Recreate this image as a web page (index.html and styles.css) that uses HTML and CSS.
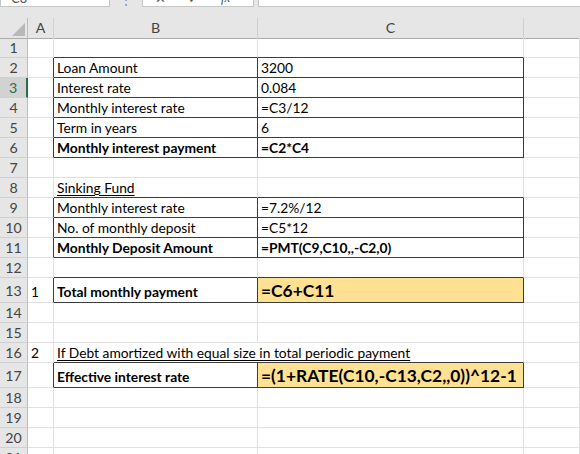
FILE: index.html
```html
<!DOCTYPE html>
<html>
<head>
<meta charset="utf-8">
<link rel="stylesheet" href="styles.css">
</head>
<body>
<div class="topbar">
  <div class="namebox"><span class="clip">C3</span></div>
  <div class="dots">⋮</div>
  <div class="fxbox"><span class="clip">✕</span><span class="clip">✓</span><span class="clip fx">fx</span></div>
  <div class="formula"></div>
</div>
<div class="sheet">
  <div class="row hrow">
    <div class="rh corner"><span class="tri"></span></div>
    <div class="ch">A</div>
    <div class="ch">B</div>
    <div class="ch">C</div>
    <div class="ch last"></div>
  </div>
  <div class="row"><div class="rh">1</div><div class="c"></div><div class="c db"></div><div class="c db"></div><div class="c"></div></div>
  <div class="row"><div class="rh">2</div><div class="c dr"></div><div class="c box">Loan Amount</div><div class="c box">3200</div><div class="c"></div></div>
  <div class="row"><div class="rh sel">3</div><div class="c dr"></div><div class="c box">Interest rate</div><div class="c box">0.084</div><div class="c"></div></div>
  <div class="row"><div class="rh">4</div><div class="c dr"></div><div class="c box">Monthly interest rate</div><div class="c box">=C3/12</div><div class="c"></div></div>
  <div class="row"><div class="rh">5</div><div class="c dr"></div><div class="c box">Term in years</div><div class="c box">6</div><div class="c"></div></div>
  <div class="row"><div class="rh">6</div><div class="c dr"></div><div class="c box b">Monthly interest payment</div><div class="c box b">=C2*C4</div><div class="c"></div></div>
  <div class="row"><div class="rh">7</div><div class="c"></div><div class="c"></div><div class="c"></div><div class="c"></div></div>
  <div class="row"><div class="rh">8</div><div class="c"></div><div class="c db"><span class="u">Sinking Fund</span></div><div class="c db"></div><div class="c"></div></div>
  <div class="row"><div class="rh">9</div><div class="c dr"></div><div class="c box">Monthly interest rate</div><div class="c box">=7.2%/12</div><div class="c"></div></div>
  <div class="row"><div class="rh">10</div><div class="c dr"></div><div class="c box">No. of monthly deposit</div><div class="c box">=C5*12</div><div class="c"></div></div>
  <div class="row"><div class="rh">11</div><div class="c dr"></div><div class="c box b">Monthly Deposit Amount</div><div class="c box b">=PMT(C9,C10,,-C2,0)</div><div class="c"></div></div>
  <div class="row"><div class="rh">12</div><div class="c"></div><div class="c db"></div><div class="c db"></div><div class="c"></div></div>
  <div class="row tall"><div class="rh">13</div><div class="c dr">1</div><div class="c box b">Total monthly payment</div><div class="c box big hl">=C6+C11</div><div class="c"></div></div>
  <div class="row"><div class="rh">14</div><div class="c"></div><div class="c"></div><div class="c"></div><div class="c"></div></div>
  <div class="row"><div class="rh">15</div><div class="c"></div><div class="c"></div><div class="c"></div><div class="c"></div></div>
  <div class="row"><div class="rh">16</div><div class="c">2</div><div class="c db span2"><span class="u">If Debt amortized with equal size in total periodic payment</span></div><div class="c"></div></div>
  <div class="row tall"><div class="rh">17</div><div class="c dr"></div><div class="c box b">Effective interest rate</div><div class="c box big hl">=(1+RATE(C10,-C13,C2,,0))^12-1</div><div class="c"></div></div>
  <div class="row"><div class="rh">18</div><div class="c"></div><div class="c"></div><div class="c"></div><div class="c"></div></div>
  <div class="row"><div class="rh">19</div><div class="c"></div><div class="c"></div><div class="c"></div><div class="c"></div></div>
  <div class="row"><div class="rh">20</div><div class="c"></div><div class="c"></div><div class="c"></div><div class="c"></div></div>
  <div class="row"><div class="rh">21</div><div class="c"></div><div class="c"></div><div class="c"></div><div class="c"></div></div>
</div>
</body>
</html>
```
FILE: styles.css
```css
* { box-sizing: border-box; }
html, body { margin: 0; padding: 0; }
body {
  width: 580px;
  height: 454px;
  overflow: hidden;
  background: #ffffff;
  font-family: "Lato", "Open Sans", sans-serif;
  font-size: 13.8px;
  color: #000;
}
.topbar {
  height: 18px;
  background: #e6e6e6;
  display: flex;
  align-items: flex-start;
}
.namebox, .fxbox, .formula {
  height: 7px;
  background: #fff;
  border: 1px solid #c6c6c6;
  border-top: none;
  overflow: hidden;
  position: relative;
}
.namebox { width: 110px; }
.dots {
  width: 32px;
  height: 7px;
  overflow: hidden;
  color: #8a8a8a;
  font-size: 12px;
  line-height: 0;
  text-align: center;
}
.fxbox {
  width: 112px;
  display: flex;
  gap: 22px;
  padding-left: 12px;
}
.formula { flex: 1; margin-left: 4px; border-right: none; }
.clip {
  display: block;
  line-height: 14px;
  margin-top: -9px;
  color: #555;
  font-size: 13px;
}
.namebox .clip { padding-left: 10px; }
.fx { font-style: italic; font-family: "Liberation Serif", serif; }

.row {
  display: grid;
  grid-template-columns: 28px 26px 204px 266px 1fr;
  height: 20px;
}
.row.tall { height: 25px; }
.hrow { height: 20px; }
.rh {
  background: #e6e6e6;
  border-right: 1px solid #bdbdbd;
  border-bottom: 1px solid #d0d0d0;
  color: #444;
  text-align: center;
  line-height: 19px;
  font-size: 14.2px;
}
.row.tall .rh { line-height: 22px; padding-top: 2px; }
.rh.sel {
  background: #d2d2d2;
  color: #217346;
  border-right: 2px solid #217346;
}
.corner {
  position: relative;
  border-bottom: 1px solid #ababab;
}
.tri {
  position: absolute;
  right: 2px;
  bottom: 2px;
  width: 0;
  height: 0;
  border-left: 13px solid transparent;
  border-bottom: 13px solid #b8b8b8;
}
.ch {
  background: #e6e6e6;
  border-right: 1px solid #d0d0d0;
  border-bottom: 1px solid #ababab;
  color: #444;
  text-align: center;
  line-height: 20px;
  font-size: 14.2px;
}
.ch.last { border-right: none; }
.c {
  border-right: 1px solid #e1e1e1;
  border-bottom: 1px solid #e1e1e1;
  padding: 0 3px;
  display: flex;
  align-items: flex-end;
  line-height: 18px;
  white-space: nowrap;
  overflow: visible;
}
.c.dr { border-right-color: #3c3c3c; }
.c.db { border-bottom-color: #3c3c3c; }
.c.box { border-right-color: #3c3c3c; border-bottom-color: #3c3c3c; }
.c.b { font-weight: bold; }
.c.big { font-weight: bold; font-size: 17.4px; line-height: 23px; }
.c.hl { background: #ffe194; }
.span2 { grid-column: span 2; }
.u { text-decoration: underline; text-underline-offset: 2px; }
.row.tall .c { line-height: 21px; }
.row.tall .c.big { line-height: 23px; }
```
